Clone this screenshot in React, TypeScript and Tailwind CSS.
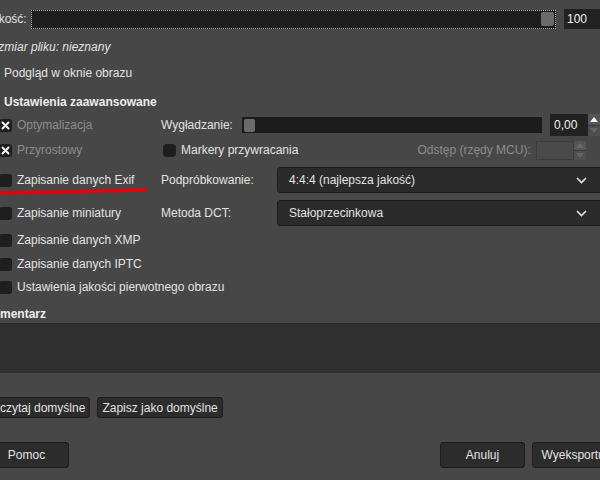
import React from 'react';

const Check: React.FC<{ checked?: boolean; className?: string }> = ({ checked, className = '' }) => (
  <span className={`flex h-[13px] w-[13px] shrink-0 items-center justify-center rounded-[3px] bg-[#1e1e1e] ${className}`}>
    {checked && (
      <svg width="9" height="9" viewBox="0 0 9 9">
        <path d="M1.5 1.5 L7.5 7.5 M7.5 1.5 L1.5 7.5" stroke="#f2f2f2" strokeWidth="2" strokeLinecap="round" />
      </svg>
    )}
  </span>
);

const Spin: React.FC<{ value?: string; disabled?: boolean }> = ({ value, disabled }) => (
  <div className="flex h-full">
    <div
      className={`flex w-[38px] items-center pl-[4px] ${
        disabled ? 'border border-[#3c3c3c] bg-[#4a4a4a]' : 'bg-[#222222] text-[#f0f0f0]'
      }`}
    >
      {value}
    </div>
    <div className="flex w-[12px] flex-col gap-[1px] bg-[#3a3a3a]">
      <div className="flex flex-1 items-center justify-center bg-[#555555]">
        <svg width="8" height="5" viewBox="0 0 8 5">
          <path d="M0 5 L4 0 L8 5 Z" fill={disabled ? '#6a6a6a' : '#f2f2f2'} />
        </svg>
      </div>
      <div className="flex flex-1 items-center justify-center bg-[#4f4f4f]">
        <svg width="8" height="5" viewBox="0 0 8 5">
          <path d="M0 0 L4 5 L8 0 Z" fill="#666666" />
        </svg>
      </div>
    </div>
  </div>
);

const Combo: React.FC<{ text: string }> = ({ text }) => (
  <div className="flex h-full w-[330px] shrink-0 items-center rounded-[3px] border border-[#1c1c1c] bg-[#2b2b2b] pl-[11px]">
    <span className="flex-1">{text}</span>
    <svg width="11" height="7" viewBox="0 0 11 7" className="mr-[19px]">
      <path d="M1 1 L5.5 5.5 L10 1" stroke="#e6e6e6" strokeWidth="1.6" fill="none" />
    </svg>
  </div>
);

const Btn: React.FC<{ children: React.ReactNode; className?: string }> = ({ children, className = '' }) => (
  <div className={`flex shrink-0 items-center whitespace-nowrap rounded-[3px] border border-[#1d1d1d] bg-[#2c2c2c] ${className}`}>{children}</div>
);

const LeftOpt: React.FC<{ label: string; checked?: boolean; dim?: boolean }> = ({ label, checked, dim }) => (
  <div className="-ml-[1px] flex w-[162px] shrink-0 items-center gap-[5px] whitespace-nowrap">
    <Check checked={checked} />
    <span className={dim ? 'text-[#8c8c8c]' : ''}>{label}</span>
  </div>
);

export default function App() {
  return (
    <div
      className="relative h-[480px] w-[600px] overflow-hidden bg-[#474747] text-[12px] leading-none text-[#e2e2e2]"
      style={{ fontFamily: '"Liberation Sans", Arial, sans-serif' }}
    >
      {/* Jakość */}
      <div className="mt-[9px] flex h-[20px] items-center">
        <span className="-ml-[14px] w-[45px] shrink-0">Jakość:</span>
        <div className="flex h-[19px] w-[525px] shrink-0 items-center border border-dotted border-[#b0b0b0] bg-[#1e1e1e] pr-[1px]">
          <div className="flex-1" />
          <div className="h-[14px] w-[13px] rounded-[2px] bg-[#6b6b6b]" />
        </div>
        <div className="ml-[8px] flex h-[20px] w-[44px] shrink-0 items-center bg-[#222222] pl-[3px] text-[#f2f2f2]">100</div>
      </div>

      <div className="mt-[8px] flex h-[20px] items-center whitespace-nowrap">
        <span className="-ml-[17px] italic">Rozmiar pliku: nieznany</span>
      </div>

      <div className="-ml-[14px] mt-[6px] flex h-[20px] items-center gap-[5px]">
        <Check />
        <span>Podgląd w oknie obrazu</span>
      </div>

      <div className="ml-[4px] mt-[9px] flex h-[20px] items-center font-bold text-[#ededed]">Ustawienia zaawansowane</div>

      {/* advanced grid */}
      <div className="mt-[2px] flex h-[22px] items-center">
        <LeftOpt label="Optymalizacja" checked dim />
        <span className="w-[81px] shrink-0">Wygładzanie:</span>
        <div className="flex h-[16px] w-[300px] shrink-0 items-center bg-[#1c1c1c] pl-[2px]">
          <div className="h-[13px] w-[11px] rounded-[2px] bg-[#6b6b6b]" />
        </div>
        <div className="ml-[8px] h-[22px]">
          <Spin value="0,00" />
        </div>
      </div>

      <div className="mt-[4px] flex h-[20px] items-center">
        <LeftOpt label="Przyrostowy" checked dim />
        <div className="ml-[2px] flex items-center gap-[5px]">
          <Check className="rounded-[4px]" />
          <span>Markery przywracania</span>
        </div>
        <span className="ml-[119px] text-[#8c8c8c]">Odstęp (rzędy MCU):</span>
        <div className="ml-[5px] h-[19px]">
          <Spin disabled />
        </div>
      </div>

      <div className="mt-[7px] flex h-[26px] items-center">
        <LeftOpt label="Zapisanie danych Exif" />
        <span className="w-[116px] shrink-0">Podpróbkowanie:</span>
        <Combo text="4:4:4 (najlepsza jakość)" />
      </div>

      <div className="mt-[7px] flex h-[26px] items-center">
        <LeftOpt label="Zapisanie miniatury" />
        <span className="w-[116px] shrink-0">Metoda DCT:</span>
        <Combo text="Stałoprzecinkowa" />
      </div>

      <div className="mt-[4px] flex h-[20px] items-center">
        <LeftOpt label="Zapisanie danych XMP" />
      </div>
      <div className="mt-[4px] flex h-[20px] items-center">
        <LeftOpt label="Zapisanie danych IPTC" />
      </div>
      <div className="mt-[3px] flex h-[20px] items-center">
        <LeftOpt label="Ustawienia jakości pierwotnego obrazu" />
      </div>

      <div className="mt-[8px] flex h-[18px] items-center">
        <span className="-ml-[16px] font-bold text-[#ededed]">Komentarz</span>
      </div>
      <div className="h-[50px] w-full border-t border-[#2a2a2a] bg-[#2f2f2f]" />

      <div className="mt-[24px] flex h-[21px] gap-[7px]">
        <Btn className="-ml-[21px] px-[4px]">Odczytaj domyślne</Btn>
        <Btn className="px-[4px]">Zapisz jako domyślne</Btn>
      </div>

      <div className="mt-[24px] flex h-[26px]">
        <Btn className="-ml-[16px] w-[85px] justify-center">Pomoc</Btn>
        <Btn className="ml-[371px] w-[85px] justify-center">Anuluj</Btn>
        <Btn className="ml-[7px] w-[85px] justify-center">Wyeksportuj</Btn>
      </div>

      {/* annotation stroke */}
      <svg className="absolute left-0 top-[187px]" width="150" height="9" viewBox="0 0 150 9">
        <path d="M-2 6 Q70 5.5 146 3" stroke="#e8000b" strokeWidth="3.5" strokeLinecap="round" fill="none" />
      </svg>
    </div>
  );
}
